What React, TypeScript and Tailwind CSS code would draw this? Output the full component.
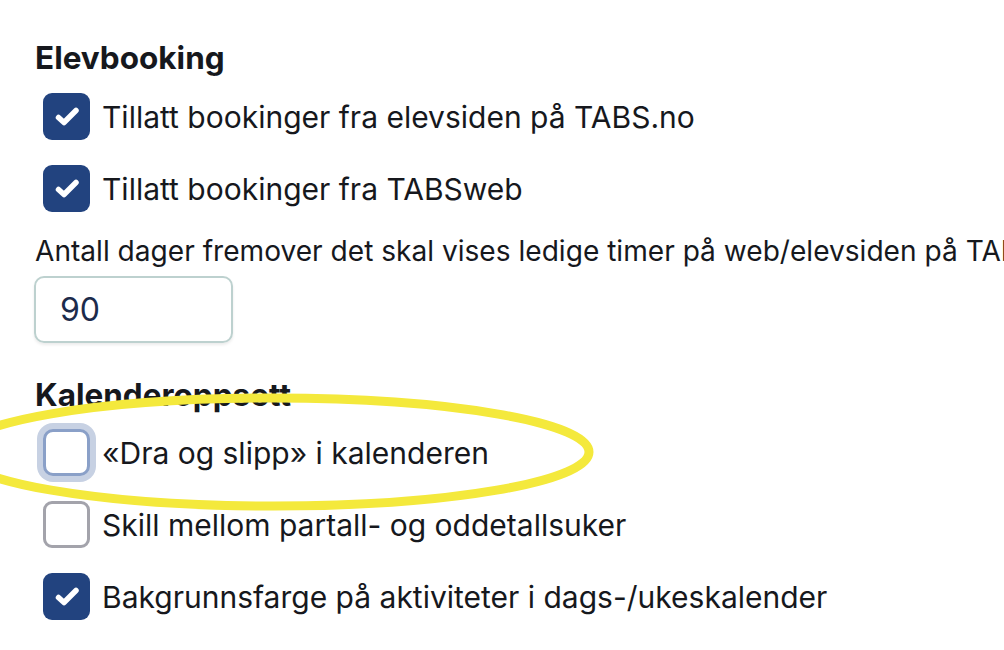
import React from "react";

function CheckIcon() {
  return (
    <svg width="47" height="47" viewBox="0 0 47 47" className="block">
      <path d="M15.5 24.5 L21 29.5 L33 17.5" fill="none" stroke="#ffffff" strokeWidth="5.5" strokeLinecap="round" strokeLinejoin="round" />
    </svg>
  );
}

function Box({ state }: { state: "checked" | "focus" | "empty" }) {
  if (state === "checked") {
    return (
      <div className="w-[47px] h-[47px] rounded-[9px] bg-[#22437f] shrink-0">
        <CheckIcon />
      </div>
    );
  }
  if (state === "focus") {
    return (
      <div className="w-[47px] h-[47px] rounded-[10px] border-[3px] border-[#8aa0c8] bg-white shrink-0 shadow-[0_0_0_6px_#c7d1e3]" />
    );
  }
  return <div className="w-[47px] h-[47px] rounded-[9px] border-[3px] border-[#a3a3ab] bg-white shrink-0" />;
}

function Row({ state, label }: { state: "checked" | "focus" | "empty"; label: string }) {
  return (
    <div className="flex items-center gap-[12px] pl-[8px] h-[47px]">
      <Box state={state} />
      <span className="whitespace-nowrap">{label}</span>
    </div>
  );
}

export default function App() {
  return (
    <div
      className="relative w-[1004px] h-[650px] bg-white overflow-hidden text-[#16181d] text-[30px] leading-none"
      style={{ fontFamily: "Inter, 'Noto Sans', sans-serif" }}
    >
      <div className="flex flex-col pl-[35px] pt-[42px]">
        <h2 className="font-bold text-[31.5px] leading-[32px]">Elevbooking</h2>
        <div className="flex flex-col gap-[25px] mt-[19px]">
          <Row state="checked" label="Tillatt bookinger fra elevsiden på TABS.no" />
          <Row state="checked" label="Tillatt bookinger fra TABSweb" />
        </div>
        <div className="mt-[24px] whitespace-nowrap leading-[30px] text-[28.1px]">
          Antall dager fremover det skal vises ledige timer på web/elevsiden på TABS.no
        </div>
        <div className="mt-[10px] w-[199px] h-[67px] -ml-[1px] rounded-[10px] border-2 border-[#bdd1cf] shadow-[0_2px_3px_rgba(0,0,0,0.08)] flex items-center pl-[24px] text-[32px] text-[#1c2b4b]">
          90
        </div>
        <h2 className="mt-[36px] font-bold text-[31.5px] leading-[32px]">Kalenderoppsett</h2>
        <div className="flex flex-col gap-[25px] mt-[18px]">
          <Row state="focus" label="«Dra og slipp» i kalenderen" />
          <Row state="empty" label="Skill mellom partall- og oddetallsuker" />
          <Row state="checked" label="Bakgrunnsfarge på aktiviteter i dags-/ukeskalender" />
        </div>
      </div>
      <svg className="absolute left-0 top-0 pointer-events-none" width="1004" height="650">
        <ellipse cx="274" cy="452" rx="315" ry="54" fill="none" stroke="#f4e93c" strokeWidth="9" />
      </svg>
    </div>
  );
}
